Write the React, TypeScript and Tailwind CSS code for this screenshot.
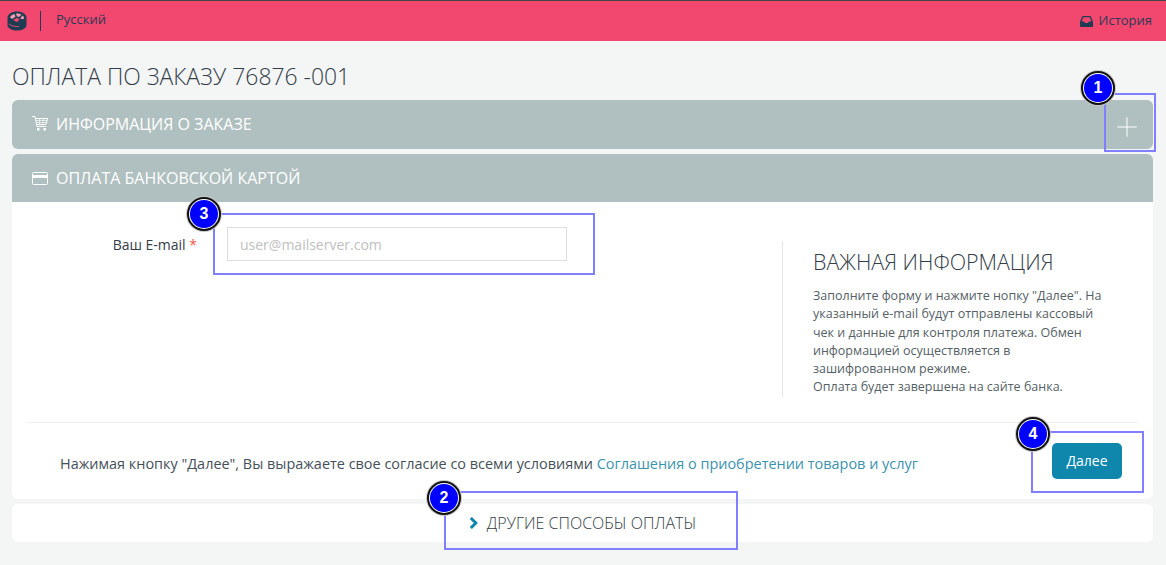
import { Plus } from "lucide-react";

const Marker = ({ n, className }: { n: number; className: string }) => (
  <div
    className={`absolute w-[34px] h-[34px] rounded-full bg-white border-2 border-[#111111] shadow-[0_0_0_1px_#c8c8c8] p-px z-20 ${className}`}
    style={{ fontFamily: '"Liberation Sans", sans-serif' }}
  >
    <div className="w-full h-full rounded-full bg-[#0000ff] flex items-center justify-center text-white text-[16px] font-bold">
      {n}
    </div>
  </div>
);

const CartIcon = () => (
  <svg width="16" height="15" viewBox="0 0 16 15" fill="none" stroke="#ffffff" strokeWidth="1">
    <path d="M0 0.5H3L5 10.5H14" />
    <path d="M3.5 2.5H15.5L14 8.5H4.5" />
    <path d="M4 4.5H15M4.5 6.5H14.5M7.5 2.5V8.5M11 2.5V8.5" strokeWidth="0.6" />
    <rect x="5" y="12" width="2.5" height="2.5" fill="#ffffff" stroke="none" />
    <rect x="11.5" y="12" width="2.5" height="2.5" fill="#ffffff" stroke="none" />
  </svg>
);

const CardIcon = () => (
  <svg width="16" height="13" viewBox="0 0 16 13" fill="none">
    <rect x="0.5" y="0.5" width="15" height="12" rx="1" stroke="#ffffff" />
    <rect x="1" y="3" width="14" height="3" fill="#ffffff" />
  </svg>
);

const InboxIcon = () => (
  <svg width="13" height="11" viewBox="0 0 13 11" fill="#1e3d52">
    <path d="M2.5 0H10.5L13 5.5V10C13 10.6 12.6 11 12 11H1C0.4 11 0 10.6 0 10V5.5L2.5 0ZM3.3 1.3L1.6 5.5H4.2L5 7H8L8.8 5.5H11.4L9.7 1.3H3.3Z" fillRule="evenodd" />
  </svg>
);

const ChevronIcon = () => (
  <svg width="9" height="12" viewBox="0 0 9 12" fill="none" stroke="#0f87ad" strokeWidth="3">
    <path d="M1.8 1L6.8 6L1.8 11" />
  </svg>
);

const Logo = () => (
  <svg width="20" height="20" viewBox="0 0 20 20">
    <path d="M0.5 7C0.5 3 5 0.5 10 0.5S19.5 3 19.5 7V14C19.5 17.5 15 19.5 10 19.5S0.5 17.5 0.5 14Z" fill="#1e3d52" />
    <ellipse cx="10" cy="7" rx="8.2" ry="5.6" fill="#1e3d52" />
    <path d="M3 6.5C3.5 4.5 5.5 3.5 7.5 3L8.5 5.5L5.5 8Z" fill="#f79ab0" />
    <path d="M9 2.5C11 2.2 13 2.6 14.5 3.5L12 6L9.8 5.3Z" fill="#f79ab0" />
    <path d="M15.5 4.5C17 5.6 17.3 7 16.6 8.3L13 7.5Z" fill="#f79ab0" />
    <path d="M6.5 9L10 6.8L12.5 8.5L10.5 10.8C9 10.8 7.5 10.2 6.5 9Z" fill="#f2486f" />
    <path d="M2 13C5 15.5 9 15.8 12 15.4" stroke="#f2486f" strokeWidth="0.9" fill="none" />
  </svg>
);

export default function App() {
  return (
    <div
      className="relative w-[1166px] h-[565px] overflow-hidden bg-[#f4f6f6] text-[#333d47]"
      style={{ fontFamily: '"Open Sans", sans-serif' }}
    >
      <header className="h-[41px] bg-[#f2486f] border-t border-[#444444] flex items-center justify-between pl-[7px] pr-[14px]">
        <div className="flex items-center">
          <Logo />
          <div className="w-px h-[20px] bg-[#1e3d52] ml-[13px] mr-[15px]" />
          <span className="text-[13px] text-[#2b3a55] -mt-[2px]">Русский</span>
        </div>
        <div className="flex items-center gap-[6px] text-[13px] text-[#2b3a55]">
          <InboxIcon />
          <span>История</span>
        </div>
      </header>

      <main className="px-[12px] pr-[13px]">
        <h1 className="text-[22.9px] leading-[33px] font-light mt-[19px] mb-[7px]">
          ОПЛАТА ПО ЗАКАЗУ 76876 -001
        </h1>

        <div className="h-[49px] rounded-[6px] bg-[#b0bfbf] flex items-center justify-between pl-[20px] pr-[10px] text-white">
          <div className="flex items-center gap-[9px] -mt-[2px]">
            <CartIcon />
            <span className="text-[16px] -ml-px">ИНФОРМАЦИЯ О ЗАКАЗЕ</span>
          </div>
          <Plus size={32} strokeWidth={0.75} className="mt-[4px]" />
        </div>

        <section className="mt-[5px] bg-white rounded-[6px]">
          <div className="h-[48px] rounded-t-[6px] bg-[#b0bfbf] flex items-center gap-[9px] pl-[20px] text-white">
            <CardIcon />
            <span className="text-[16px] -ml-px">ОПЛАТА БАНКОВСКОЙ КАРТОЙ</span>
          </div>
          <div className="flex h-[221px] border-b border-[#eeeeee] mx-[15px]">
            <div className="w-[755px] flex pt-[25px]">
              <label className="w-[170px] text-right text-[14px] leading-[36px]">
                Ваш E-mail <span className="text-[#f05a4a]">*</span>
              </label>
              <input
                placeholder="user@mailserver.com"
                className="ml-[30px] w-[340px] h-[34px] border border-[#dddddd] px-[12px] text-[14px] placeholder:text-[#c0c0c0] outline-none"
              />
            </div>
            <div className="mt-[39px] h-[156px] border-l border-[#e5e5e5] pl-[30px] w-[330px]">
              <h2 className="text-[21.4px] leading-[30px] font-light mt-[6px] mb-[10px]">ВАЖНАЯ ИНФОРМАЦИЯ</h2>
              <p className="text-[12.5px] leading-[18.3px] text-[#555f66] w-[295px]">
                Заполните форму и нажмите нопку "Далее". На указанный e-mail будут отправлены кассовый чек и данные для контроля платежа. Обмен информацией осуществляется в зашифрованном режиме.
                <br />
                Оплата будет завершена на сайте банка.
              </p>
            </div>
          </div>
          <div className="h-[76px] flex items-center justify-between pl-[48px] pr-[31px]">
            <p className="text-[14.44px] text-[#444f58] mt-[6px]">
              Нажимая кнопку "Далее", Вы выражаете свое согласие со всеми условиями{" "}
              <a className="text-[#3a92ad]">Соглашения о приобретении товаров и услуг</a>
            </p>
            <button className="w-[70px] h-[36px] rounded-[5px] bg-[#0f87ad] text-white text-[14px] pb-[2px]">Далее</button>
          </div>
        </section>

        <div className="mt-[5px] h-[38px] bg-white rounded-[6px] flex items-center justify-center gap-[9px] text-[16px] font-light text-[#333d47]">
          <ChevronIcon />
          <span>ДРУГИЕ СПОСОБЫ ОПЛАТЫ</span>
        </div>
      </main>

      {/* annotations */}
      <div className="absolute left-[1104px] top-[93px] w-[52px] h-[59px] border-2 border-[#7f7fff]" />
      <div className="absolute left-[213px] top-[213px] w-[382px] h-[62px] border-2 border-[#7f7fff]" />
      <div className="absolute left-[1031px] top-[431px] w-[113px] h-[62px] border-2 border-[#7f7fff]" />
      <div className="absolute left-[444px] top-[491px] w-[294px] h-[59px] border-2 border-[#7f7fff]" />
      <Marker n={1} className="left-[1081px] top-[71px]" />
      <Marker n={3} className="left-[187px] top-[197px]" />
      <Marker n={4} className="left-[1016px] top-[417px]" />
      <Marker n={2} className="left-[427px] top-[481px]" />
    </div>
  );
}
